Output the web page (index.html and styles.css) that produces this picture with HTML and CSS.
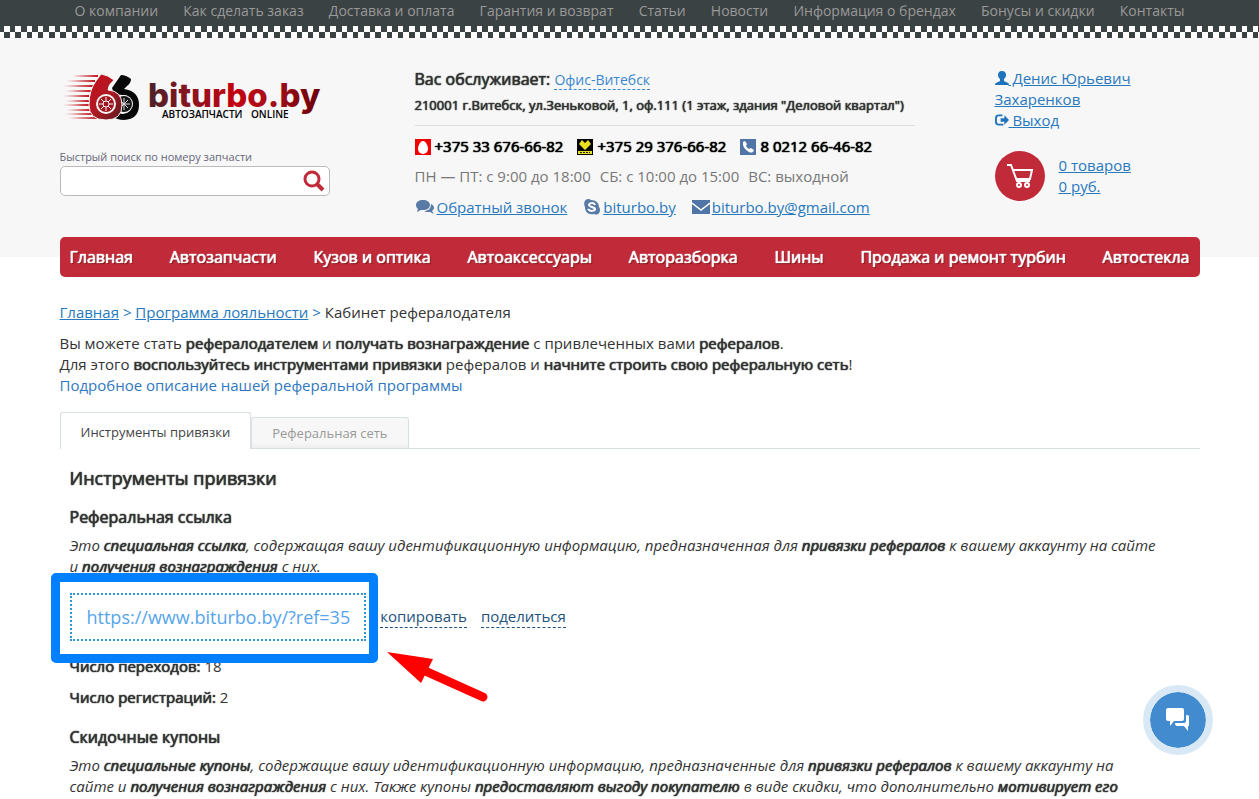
FILE: index.html
```
<!DOCTYPE html>
<html lang="ru">
<head>
    <meta charset="UTF-8">
    <meta name="viewport" content="width=device-width, initial-scale=1.0">
    <title>Кабинет рефералодателя</title>
    <link rel="stylesheet" href="styles.css">
</head>
<body>
    <header class="header">
        <div class="topbar">
            <nav class="container top-menu">
                <a href="#">О компании</a>
                <a href="#">Как сделать заказ</a>
                <a href="#">Доставка и оплата</a>
                <a href="#">Гарантия и возврат</a>
                <a href="#">Статьи</a>
                <a href="#">Новости</a>
                <a href="#">Информация о брендах</a>
                <a href="#">Бонусы и скидки</a>
                <a href="#">Контакты</a>
            </nav>
        </div>
        <div class="checker"></div>
        <div class="container header-grid">
            <div class="brand">
                <a href="#" class="logo" aria-label="biturbo.by">
                    <svg width="270" height="54" viewBox="0 0 270 54">
                        <defs>
                            <linearGradient id="textRed" x1="0" x2="1" y1="0" y2="0">
                                <stop offset="0" stop-color="#4a2228"/>
                                <stop offset="0.25" stop-color="#8a1420"/>
                                <stop offset="0.5" stop-color="#c4000f"/>
                                <stop offset="0.7" stop-color="#a8101a"/>
                                <stop offset="1" stop-color="#6a0006"/>
                            </linearGradient>
                            <linearGradient id="markRed" x1="0" x2="1" y1="0" y2="1">
                                <stop offset="0" stop-color="#c8101c"/>
                                <stop offset="0.5" stop-color="#b01822"/>
                                <stop offset="1" stop-color="#5c1a20"/>
                            </linearGradient>
                            <linearGradient id="lineRed" x1="0" x2="1" y1="0" y2="0">
                                <stop offset="0" stop-color="#d01020" stop-opacity="0.5"/>
                                <stop offset="0.5" stop-color="#c01420"/>
                            </linearGradient>
                        </defs>
                        <path fill="url(#lineRed)" d="M12 6l26-1v2zM6 11l29-1v2zM2 16l31-1v2zM5 21l26-1v2zM2 26l27-1v2zM5 31l24-1v2zM2 35l27-1v2zM6 40l25-1v2zM4 44l30-1v2zM8 48l30-1v2z"/>
                        <path fill="#080808" d="M61 5Q66 5 71 9Q71 13 67 16L64 19Q79 21 79 35Q79 49 64 50Q57 50 52 46L55 40Q59 44 63 44Q72 43 72 34Q72 25 62 25L54 24L52 18Z"/>
                        <circle cx="64" cy="34" r="9" fill="#f7f7f7"/>
                        <circle cx="64" cy="34" r="8" fill="#171717"/>
                        <path stroke="#ddd" d="M64 28v12M58 34h12M60 30l8 8M68 30l-8 8"/>
                        <path fill="url(#markRed)" stroke="#f7f7f7" d="M41 4Q48 5 54 10Q48 15 48 20Q62 21 62 35Q62 50 46 50Q29 50 29 35Q29 20 36 11Z"/>
                        <circle cx="46" cy="34" r="10" fill="#f7f7f7"/>
                        <circle cx="46" cy="34" r="8" fill="#a31621"/>
                        <path stroke="#f7f7f7" d="M46 27v14M39 34h14M41 29l10 10M51 29l-10 10"/>
                        <circle cx="46" cy="34" r="3" fill="#a31621" stroke="#f7f7f7"/>
                        <text class="logo-name" x="88" y="37" fill="url(#textRed)">biturbo.by</text>
                        <text class="logo-sub" x="102" y="48">АВТОЗАПЧАСТИ</text>
                        <text class="logo-sub" x="191" y="48">ONLINE</text>
                    </svg>
                </a>
                <form class="search">
                    <label for="search">Быстрый поиск по номеру запчасти</label>
                    <div class="search-box">
                        <input type="text" id="search">
                        <button type="button" aria-label="Найти">
                            <svg width="22" height="22" viewBox="0 0 22 22" fill="none" stroke="#c12a38">
                                <circle cx="9" cy="9" r="7" stroke-width="3"/>
                                <path d="M14 14l6 6" stroke-width="4"/>
                            </svg>
                        </button>
                    </div>
                </form>
            </div>

            <div class="contacts">
                <div class="office"><b>Вас обслуживает:</b> <a href="#">Офис-Витебск</a></div>
                <div class="address">210001 г.Витебск, ул.Зеньковой, 1, оф.111 (1 этаж, здания "Деловой квартал")</div>
                <div class="phones">
                    <span>
                        <svg width="16" height="16" viewBox="0 0 16 16"><path fill="#f20000" d="M0 0h16v16H0z"/><path fill="#fff" d="M8 2C5 2 3 7 3 10a5 5 0 0 0 10 0C13 7 11 2 8 2z"/></svg>
                        +375 33 676-66-82
                    </span>
                    <span>
                        <svg width="16" height="16" viewBox="0 0 16 16"><path d="M0 0h16v16H0z"/><path fill="#e8e020" d="M8 11L2 5l3-4 3 3 3-3 3 4zM1 12h14v3H1z"/><path stroke="#222" d="M3 13.500h10" stroke-dasharray="2 1"/></svg>
                        +375 29 376-66-82
                    </span>
                    <span>
                        <svg width="16" height="16" viewBox="0 0 16 16"><path fill="#4f74a6" d="M0 0h16v16H0z"/><path fill="#fff" d="M3 3l2-1 2 3-1 2q1 2 3 3l2-1 3 2-1 2q-2 1-4 0Q4 10 3 6z"/></svg>
                        8 0212 66-46-82
                    </span>
                </div>
                <div class="hours"><span>ПН — ПТ: с 9:00 до 18:00</span><span>СБ: с 10:00 до 15:00</span><span>ВС: выходной</span></div>
                <div class="links">
                    <span>
                        <svg width="20" height="17" viewBox="0 0 20 17" fill="#5a7aa6"><path d="M8 1c4 0 7 2 7 5s-3 5-7 5l-2 0-4 2 1-3C2 9 1 8 1 6c0-3 3-5 7-5z"/><path d="M16 5c2 1 3 2 3 4 0 1-1 2-2 3l2 3-4-2c-3 0-5 0-6-1 4 0 7-2 7-7z"/></svg>
                        <a href="#">Обратный звонок</a>
                    </span>
                    <span>
                        <svg width="18" height="17" viewBox="0 0 18 17"><path fill="#5a7aa6" d="M5 0q2 0 3 1c5 0 8 3 8 7q1 1 1 3a4 4 0 0 1-6 4C5 16 2 13 2 8 0 4 2 0 5 0z"/><path fill="none" stroke="#fff" stroke-width="2" d="M12 6c-1-3-6-2-6 0s6 2 6 4-5 3-7 0"/></svg>
                        <a href="#">biturbo.by</a>
                    </span>
                    <span>
                        <svg width="18" height="17" viewBox="0 0 18 17"><path fill="#4f74a6" d="M0 1h18v14H0z"/><path fill="none" stroke="#fff" stroke-width="1.500" d="M0 4l9 7 9-7"/></svg>
                        <a href="#">biturbo.by@gmail.com</a>
                    </span>
                </div>
            </div>

            <div class="account">
                <a href="#"><svg width="14" height="14" viewBox="0 0 14 14"><path fill="#1f73bd" d="M7 0c3 0 4 2 4 4 0 2-1 3-2 4v2l4 2q1 0 1 2H0q0-2 1-2l4-2V8C4 7 3 6 3 4c0-2 1-4 4-4z"/></svg> Денис Юрьевич Захаренков</a><br>
                <a href="#"><svg width="14" height="14" viewBox="0 0 15 14"><path fill="none" stroke="#1f73bd" stroke-width="2" d="M8 2H4Q1 2 1 5v4q0 3 3 3h5"/><path fill="#1f73bd" d="M6 5h4V2l5 5-5 5V9H6z"/></svg> Выход</a>
                <div class="cart">
                    <span class="cart-icon">
                        <svg width="28" height="26" viewBox="0 0 28 26" fill="none" stroke="#fff" stroke-width="2"><path d="M1 2h4l6 16h13M7 7h19l-2 9H11"/><circle cx="13" cy="22" r="2"/><circle cx="21" cy="22" r="2"/></svg>
                    </span>
                    <span><a href="#">0 товаров</a><br><a href="#">0 руб.</a></span>
                </div>
            </div>
        </div>
    </header>

    <div class="container">
        <nav class="main-menu">
            <a href="#">Главная</a>
            <a href="#">Автозапчасти</a>
            <a href="#">Кузов и оптика</a>
            <a href="#">Автоаксессуары</a>
            <a href="#">Авторазборка</a>
            <a href="#">Шины</a>
            <a href="#">Продажа и ремонт турбин</a>
            <a href="#">Автостекла</a>
        </nav>

        <main>
            <div class="breadcrumbs">
                <a href="#">Главная</a> <i>&gt;</i> <a href="#">Программа лояльности</a> <i>&gt;</i> <span>Кабинет рефералодателя</span>
            </div>
            <p class="intro">
                Вы можете стать <b>рефералодателем</b> и <b>получать вознаграждение</b> с привлеченных вами <b>рефералов</b>.<br>
                Для этого <b>воспользуйтесь инструментами привязки</b> рефералов и <b>начните строить свою реферальную сеть</b>!<br>
                <a href="#">Подробное описание нашей реферальной программы</a>
            </p>

            <div class="tabs">
                <button type="button" class="tab active">Инструменты привязки</button>
                <button type="button" class="tab">Реферальная сеть</button>
            </div>

            <section class="tab-content">
                <h2>Инструменты привязки</h2>
                <h3>Реферальная ссылка</h3>
                <p class="note">Это <b>специальная ссылка</b>, содержащая вашу идентификационную информацию, предназначенная для <b>привязки рефералов</b> к вашему аккаунту на сайте<br>и <b>получения вознаграждения</b> с них.</p>
                <div class="ref-row">
                    <div class="ref-link">
                        https://www.biturbo.by/?ref=35
                        <div class="highlight"></div>
                        <svg class="arrow" width="102" height="54" viewBox="0 0 102 54"><path fill="#f00" d="M0 1L46 8 34 32z"/><path stroke="#f00" stroke-width="9" stroke-linecap="round" d="M36 19l60 27"/></svg>
                    </div>
                    <button type="button">копировать</button>
                    <button type="button">поделиться</button>
                </div>
                <p class="stat"><b>Число переходов:</b> 18</p>
                <p class="stat"><b>Число регистраций:</b> 2</p>
                <h3>Скидочные купоны</h3>
                <p class="note">Это <b>специальные купоны</b>, содержащие вашу идентификационную информацию, предназначенные для <b>привязки рефералов</b> к вашему аккаунту на<br>сайте и <b>получения вознаграждения</b> с них. Также купоны <b>предоставляют выгоду покупателю</b> в виде скидки, что дополнительно <b>мотивирует его</b></p>
            </section>
        </main>
    </div>

    <button type="button" class="chat" aria-label="Чат">
        <svg width="26" height="26" viewBox="0 0 26 26" fill="#fff"><path d="M3 1h14q2 0 2 2v9q0 2-2 2H9l-4 5v-5H3q-2 0-2-2V3q0-2 2-2z"/><path d="M21 8q3 0 3 1v10h-1v5l-4-5h-7q-2 0-2-3h9q2 0 2-2z"/></svg>
    </button>
</body>
</html>
```
FILE: styles.css
```
* {
    box-sizing: border-box;
}
body {
    margin: 0;
    font-family: "Open Sans", sans-serif;
    font-size: 15px;
    font-weight: 400;
    line-height: 21px;
    color: #333;
    background-color: #fff;
}
a {
    color: #2878be;
}
b, h2, h3, .address, .phones {
    font-weight: 400;
    text-shadow: 0 0 1px currentColor, 0 0 1px currentColor;
}
button {
    font-family: inherit;
    font-weight: inherit;
    cursor: pointer;
}
.container {
    max-width: 1140px;
    margin: 0 auto;
}
.header {
    background-color: #f7f7f7;
    padding-bottom: 39px;
}
.topbar {
    background-color: #3b4243;
    height: 26px;
}
.top-menu {
    display: flex;
    justify-content: space-between;
    padding: 0 15px;
}
.top-menu a {
    color: #999;
    font-size: 14px;
    text-decoration: none;
}
/* two rows of squares, the second one inverted */
.checker {
    height: 12px;
    background:
        repeating-linear-gradient(90deg, #3b4243 0 4px, #fff 4px 10px, #3b4243 10px 15px, #fff 15px 21px, #3b4243 21px 27px, #fff 27px 32px, #3b4243 32px 38px, #fff 38px 43px, #3b4243 43px 45px) top / 100% 6px no-repeat,
        repeating-linear-gradient(90deg, #fff 0 4px, #3b4243 4px 10px, #fff 10px 15px, #3b4243 15px 21px, #fff 21px 27px, #3b4243 27px 32px, #fff 32px 38px, #3b4243 38px 43px, #fff 43px 45px) bottom / 100% 6px no-repeat;
}
.header-grid {
    display: grid;
    grid-template-columns: 355fr 580fr 205fr;
    padding-top: 30px;
}
.logo {
    display: block;
    height: 54px;
    margin-top: 2px;
}
.logo-name {
    font-family: Inter, sans-serif;
    font-size: 33px;
    font-weight: 800;
}
.logo-sub {
    font-family: "Open Sans", sans-serif;
    font-size: 10px;
    font-weight: 600;
}
.search {
    width: 270px;
    margin-top: 24px;
}
.search label {
    display: block;
    font-size: 11px;
    line-height: 18px;
    color: #667;
}
.search-box {
    display: flex;
    align-items: center;
    height: 30px;
    background-color: #fff;
    border: 1px solid #bbb;
    border-radius: 5px;
}
.search-box input {
    flex: 1;
    min-width: 0;
    border: none;
    outline: none;
    background: none;
    padding: 0 10px;
}
.search-box button {
    display: flex;
    border: none;
    background: none;
    padding: 0 4px;
}
.contacts {
    max-width: 500px;
}
.office {
    font-size: 16px;
    line-height: 22px;
}
.office a {
    font-size: 14px;
    color: #3a86d0;
    text-decoration: none;
    border-bottom: 1px dashed;
}
.address {
    font-size: 13px;
    line-height: 20px;
    margin-top: 4px;
    padding-bottom: 10px;
    border-bottom: 1px solid #ddd;
    white-space: nowrap;
}
.phones, .hours, .links {
    display: flex;
}
.phones {
    gap: 14px;
    margin-top: 10px;
    color: #000;
}
.phones span {
    display: flex;
    align-items: center;
    gap: 4px;
}
.hours {
    gap: 9px;
    margin-top: 9px;
    color: #777;
}
.links {
    gap: 16px;
    margin-top: 10px;
}
.links span {
    display: flex;
    align-items: center;
    gap: 2px;
}
.account svg {
    vertical-align: -1px;
}
.cart {
    display: flex;
    align-items: center;
    gap: 14px;
    margin-top: 20px;
}
.cart-icon {
    display: flex;
    align-items: center;
    justify-content: center;
    width: 50px;
    height: 50px;
    border-radius: 50%;
    background-color: #c12a38;
}
.main-menu {
    display: flex;
    justify-content: space-between;
    align-items: center;
    height: 40px;
    margin-top: -20px;
    padding: 0 10px;
    background-color: #c12a38;
    border-radius: 5px;
}
.main-menu a {
    color: #fff;
    font-size: 16px;
    text-decoration: none;
    text-shadow: 0 0 1px #fff, 0 0 1px #fff, 1px 1px 1px #600;
}
.breadcrumbs {
    margin-top: 25px;
}
.breadcrumbs i {
    font-style: normal;
    color: #2878be;
}
.intro {
    margin: 10px 0 16px;
}
.intro a {
    color: #2f78c0;
    text-decoration: none;
}
.tabs {
    display: flex;
    align-items: flex-end;
    border-bottom: 1px solid #d8e0e2;
}
.tab {
    height: 31px;
    padding: 0 20px;
    font-size: 13px;
    color: #999;
    background: linear-gradient(#f7f7f7 80%, #eee);
    border: 1px solid #d8e0e2;
    border-bottom: none;
    border-radius: 3px 3px 0 0;
}
.tab.active {
    height: 37px;
    margin-bottom: -1px;
    padding-top: 2px;
    color: #444;
    background: #fff;
}
.tab-content {
    padding: 0 10px;
}
h2 {
    margin: 17px 0 0;
    font-size: 18px;
    line-height: 24px;
}
h3 {
    margin: 16px 0 0;
    font-size: 16px;
    line-height: 22px;
}
p.note {
    margin: 7px 0 0;
    font-style: italic;
}
.ref-row {
    display: flex;
    align-items: center;
    gap: 14px;
    margin: 16px 0 15px;
}
.ref-row button {
    padding: 0;
    font-size: 15px;
    line-height: 21px;
    color: #23527c;
    background: none;
    border: none;
    border-bottom: 1px dashed #23527c;
}
.ref-link {
    position: relative;
    padding: 10px 14px 10px 15px;
    font-size: 18px;
    line-height: 24px;
    color: #56a5ec;
    border: 2px dotted #2f96d0;
}
/* marker frame and arrow drawn over the page */
.highlight {
    position: absolute;
    inset: -22px -14px -24px -21px;
    border: 9px solid #0080ff;
    border-radius: 5px;
}
.arrow {
    position: absolute;
    left: 315px;
    top: 56px;
}
p.stat {
    margin: 10px 0 0;
}
p.stat + h3 {
    margin-top: 18px;
}
.chat {
    position: fixed;
    right: 46px;
    bottom: 44px;
    display: flex;
    align-items: center;
    justify-content: center;
    width: 70px;
    height: 70px;
    padding: 0;
    color: #fff;
    background-color: #418bce;
    background-clip: padding-box;
    border: 7px solid #d9e8f5;
    border-radius: 50%;
}
```
